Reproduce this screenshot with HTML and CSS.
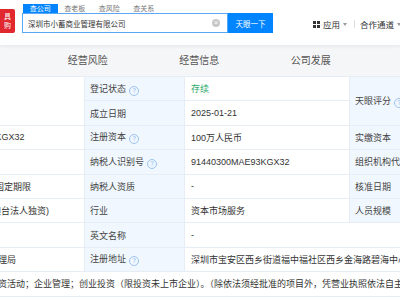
FILE: index.html
```html
<!DOCTYPE html>
<html lang="zh-CN">
<head>
    <meta charset="UTF-8">
    <meta name="viewport" content="width=device-width, initial-scale=1.0">
    <title>深圳市小蓄商业管理有限公司</title>
    <link rel="stylesheet" href="styles.css">
</head>
<body>
    <header class="topbar">
        <div class="logo">具<br>购</div>
        <div class="search">
            <div class="search-tabs">
                <span class="tab active">查公司</span><span class="tab">查老板</span><span class="tab">查风险</span><span class="tab">查关系</span>
            </div>
            <div class="search-row">
                <div class="search-input">
                    <span class="query">深圳市小蓄商业管理有限公司</span>
                    <span class="clear">×</span>
                </div>
                <button class="search-btn">天眼一下</button>
            </div>
        </div>
        <nav class="topnav">
            <svg class="grid-icon" width="7" height="7" viewBox="0 0 7 7">
                <rect x="0" y="0" width="3" height="3" fill="#333"/>
                <rect x="4" y="0" width="3" height="3" fill="#333"/>
                <rect x="0" y="4" width="3" height="3" fill="#333"/>
                <rect x="4" y="4" width="3" height="3" fill="#333"/>
            </svg>
            <span>应用</span><i class="caret"></i>
            <span class="sep"></span>
            <span>合作通道</span><i class="caret"></i>
        </nav>
    </header>

    <div class="section-tabs">
        <span>经营风险</span>
        <span>经营信息</span>
        <span>公司发展</span>
    </div>

    <div class="info-wrap">
        <table class="info">
            <colgroup>
                <col class="c-val-a">
                <col class="c-label">
                <col class="c-val-b">
                <col class="c-label">
                <col class="c-val-c">
            </colgroup>
            <tr>
                <td rowspan="2"></td>
                <td class="label">登记状态<i class="help">?</i></td>
                <td class="green">存续</td>
                <td class="label" rowspan="2">天眼评分<i class="help">?</i></td>
                <td rowspan="2"></td>
            </tr>
            <tr>
                <td class="label">成立日期</td>
                <td>2025-01-21</td>
            </tr>
            <tr>
                <td>91440300MAE93KGX32</td>
                <td class="label">注册资本<i class="help">?</i></td>
                <td>100万人民币</td>
                <td class="label">实缴资本</td>
                <td>-</td>
            </tr>
            <tr>
                <td></td>
                <td class="label">纳税人识别号<i class="help">?</i></td>
                <td>91440300MAE93KGX32</td>
                <td class="label">组织机构代码</td>
                <td>MAE93KGX-3</td>
            </tr>
            <tr>
                <td>2025-01-21 至 无固定期限</td>
                <td class="label">纳税人资质</td>
                <td>-</td>
                <td class="label">核准日期</td>
                <td>2025-01-21</td>
            </tr>
            <tr>
                <td>有限责任公司(港澳台法人独资)</td>
                <td class="label">行业</td>
                <td>资本市场服务</td>
                <td class="label">人员规模</td>
                <td>-</td>
            </tr>
            <tr>
                <td></td>
                <td class="label">英文名称</td>
                <td colspan="3">-</td>
            </tr>
            <tr>
                <td>深圳市市场监督管理局</td>
                <td class="label">注册地址<i class="help">?</i></td>
                <td colspan="3">深圳市宝安区西乡街道福中福社区西乡金海路碧海中心A座1801</td>
            </tr>
            <tr>
                <td colspan="5">以自有资金从事投资活动；企业管理；创业投资（限投资未上市企业）。（除依法须经批准的项目外，凭营业执照依法自主开展经营活动）</td>
            </tr>
        </table>
    </div>
</body>
</html>
```

FILE: styles.css
```css
body {
    margin: 0;
    width: 400px;
    height: 300px;
    overflow: hidden;
    background-color: #ffffff;
    font-family: "Liberation Sans", "Noto Sans CJK SC", sans-serif;
    color: #333;
}
.topbar {
    display: flex;
    align-items: flex-start;
    height: 45px;
    padding-top: 4px;
    box-sizing: border-box;
    background-color: #ffffff;
    box-shadow: 0 2px 3px rgba(0,0,0,0.05);
    position: relative;
    z-index: 1;
}
.logo {
    width: 15px;
    height: 24px;
    margin-top: 5px;
    padding: 3px 0 0 4px;
    box-sizing: border-box;
    background-color: #e0282e;
    color: #fff;
    font-size: 7px;
    line-height: 9px;
    overflow: hidden;
    border-radius: 0 2px 2px 0;
}
.search {
    margin-left: 7px;
}
.search-tabs {
    display: flex;
    height: 9px;
    margin-left: 1px;
}
.tab {
    width: 34.5px;
    font-size: 7px;
    line-height: 9px;
    text-align: center;
    color: #777;
}
.tab.active {
    background-color: #0084ff;
    color: #fff;
}
.search-row {
    display: flex;
}
.search-input {
    display: flex;
    align-items: center;
    width: 206px;
    height: 20px;
    padding-left: 5px;
    box-sizing: border-box;
    border: 1px solid #5aa7f5;
}
.query {
    flex: 1;
    font-size: 7.5px;
    color: #333;
}
.clear {
    width: 8px;
    height: 8px;
    margin-right: 7px;
    border-radius: 50%;
    background-color: #c8c8c8;
    color: #fff;
    font-size: 7px;
    line-height: 8px;
    text-align: center;
}
.search-btn {
    width: 45px;
    height: 20px;
    padding: 0;
    border: none;
    background-color: #0084ff;
    color: #fff;
    font-family: inherit;
    font-size: 7.5px;
}
.topnav {
    display: flex;
    align-items: center;
    height: 20px;
    margin: 10px -1px 0 auto;
    font-size: 8.5px;
    color: #333;
}
.grid-icon {
    margin-right: 3px;
}
.caret {
    width: 0;
    height: 0;
    margin-left: 3px;
    border-left: 2.5px solid transparent;
    border-right: 2.5px solid transparent;
    border-top: 3px solid #999;
}
.sep {
    width: 1px;
    height: 8px;
    margin: 0 5px 0 7px;
    background-color: #ddd;
}
.section-tabs {
    display: flex;
    height: 31px;
    padding-left: 32px;
    background-color: #f5f6f7;
    font-size: 10px;
    line-height: 31px;
    color: #555;
}
.section-tabs span {
    width: 111.5px;
    text-align: center;
}
.info-wrap {
    overflow: hidden;
}
.info {
    width: 680px;
    margin-left: -81px;
    border-collapse: collapse;
    table-layout: fixed;
    font-size: 9px;
}
.c-val-a { width: 165px; }
.c-label { width: 100px; }
.c-val-b { width: 165px; }
.c-val-c { width: 150px; }
.info tr {
    height: 24.4px;
}
.info td {
    padding: 0 6px;
    border: 1px solid #e6edf5;
    white-space: nowrap;
    overflow: hidden;
    color: #333;
}
.info td.label {
    padding-left: 5px;
    background-color: #f1f7fe;
    color: #444;
}
.info td.green {
    color: #2aa96b;
}
.help {
    display: inline-block;
    width: 8px;
    height: 8px;
    margin-left: 3px;
    border: 1px solid #9cc5f2;
    border-radius: 50%;
    color: #8bb9ee;
    font-size: 6.5px;
    font-style: normal;
    line-height: 8px;
    text-align: center;
    vertical-align: -1px;
}
```
